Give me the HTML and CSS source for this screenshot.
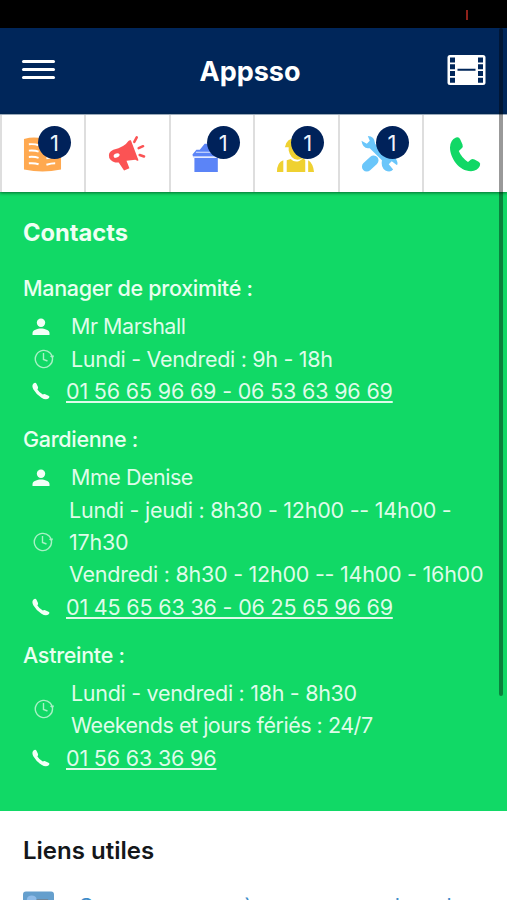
FILE: index.html
```html
<!DOCTYPE html>
<html lang="fr">
<head>
<meta charset="utf-8">
<title>Appsso</title>
<link rel="stylesheet" href="styles.css">
</head>
<body>
<svg width="0" height="0" class="defs" aria-hidden="true">
  <symbol id="person" viewBox="0 0 18 18"><circle cx="9" cy="4.7" r="4.2"/><path d="M.5 17v-2c0-3 5-4.500 8.500-4.500s8.500 1.500 8.500 4.500v2z"/></symbol>
  <symbol id="clock" viewBox="0 0 20 20"><path d="M18.500 9.500a8.600 8.600 0 1 1-2.300-5.400q2 2 2.300 5.400M9.500 4v6.500l4 1.500M16.500 7l2 1.500 1-2" fill="none" stroke="currentColor" stroke-width="1.400"/></symbol>
  <symbol id="phone" viewBox="0 0 32 36"><path d="M7 1.500Q10 .5 11.300 3.500L13.500 8.500Q14.500 11 12.500 12.500L9.800 15Q12.500 21.500 19 26L22 23.500Q23.500 22.500 25.500 23.500L30 26Q32 27.500 30.800 30Q28.500 35 22 35.300C10 35 1 22 1 11.500Q1.200 4 7 1.500z"/></symbol>
  <symbol id="handset" viewBox="0 0 18 18"><path d="M1.500 1.500Q3.500-.1 4.500 1.800L6 5Q6.300 6.200 5.400 7.400Q7.500 10.600 10.800 12.600Q12 11.600 13.200 12.200L16.500 13.700Q18.200 14.600 16.700 16.200Q14 18.700 9.500 15.700Q4.500 12.700 1.300 7.200Q-.6 3.500 1.500 1.500z"/></symbol>
</svg>
<div class="statusbar"><span class="rec"></span></div>
<header class="topbar">
  <div class="burger"><i></i><i></i><i></i></div>
  <h1>Appsso</h1>
  <svg class="film" viewBox="0 0 38 30"><rect width="38" height="30" rx="2.500" fill="#fff"/><path d="M2.500 2.500h5v5h-5zM2.500 9.300h5v5h-5zM2.500 16h5v5h-5zM2.500 22.700h5v5h-5zM30.500 2.500h5v5h-5zM30.500 9.300h5v5h-5zM30.500 16h5v5h-5zM30.500 22.700h5v5h-5zM10 13.800h18v2H10z" fill="#00265a"/></svg>
</header>
<nav class="tabs">
  <div class="tab">
    <svg class="ico" viewBox="0 0 40 40"><path d="M1 4Q12 1 20 4Q29 1 39 4V35.500Q29 37.500 20 37.500Q11 37.500 1 35.500z" fill="#ffa950"/><path d="M6 9.500q6-.5 10 1M6 16q6-.5 10 1M6 22.500q6-.5 10 1M6 29q6-.5 10 1M24 24q5-1.500 9-1.500M24 30.500q5-1.500 9-1.500" fill="none" stroke="#fff" stroke-width="2"/></svg>
    <span class="badge">1</span>
  </div>
  <div class="tab">
    <svg class="ico" viewBox="0 0 40 40"><path fill-rule="evenodd" d="M24.500 5.500L32.300 25.800Q31 27 29 25.500L20 26.500L23 34L17.500 36.500L12 28.300Q5 28.500 2.300 23.500Q.5 17.500 6.500 15Q18 12.500 22 6.200Q23 5 24.500 5.500M8 19.500Q5.500 21.500 8 23.500Q13 23 13 20Q11.500 17.800 8 19.500z" fill="#fb5354"/><path d="M28 7l2.500-4.500M32.500 13.500l4.500-2M33.500 20.500l4.500 1.500" stroke="#fb5354" stroke-width="2.600" stroke-linecap="round"/></svg>
  </div>
  <div class="tab">
    <svg class="ico" viewBox="0 0 40 40"><path d="M3.500 23.500h24V38h-24zM1.500 20l4-5H9l5-6h14v13H2z" fill="#5b84f7"/><path d="M2 22.800h26M5 17.700h23" stroke="#dce5ff" stroke-width="1.200"/></svg>
    <span class="badge">1</span>
  </div>
  <div class="tab">
    <svg class="ico" viewBox="0 0 40 40"><path d="M9.500 11.500Q11 3.500 20 3v9.500h11v5Q29 25 22 25.500Q15 25 13 16v-3.500H9z" fill="#efd131"/><path d="M1 38q0-10 6.500-12v12zM11 38V26l4-1.500q6 6 13-1l2 2.500v12zM33 38V26q5 3 6 12z" fill="#efd131"/></svg>
    <span class="badge">1</span>
  </div>
  <div class="tab">
    <svg class="ico" viewBox="0 0 40 40"><path d="M8 1Q15 1 15.500 9L27 22Q33 20.500 36.500 24Q39.500 28 38 31L32.500 27L29.500 30L34 35.500Q31 39 26 36.500Q21 33 22.500 26L10 13.500Q3 15 1.500 6L7 9L10 6z" fill="#6ac6fa"/><path d="M7 32.500L14 26" stroke="#6ac6fa" stroke-width="10" stroke-linecap="round"/></svg>
    <span class="badge">1</span>
  </div>
  <div class="tab"><svg class="call"><use href="#phone"/></svg></div>
</nav>
<main class="contacts">
  <h2>Contacts</h2>
  <section>
    <h3>Manager de proximité :</h3>
    <div class="row"><svg class="mini"><use href="#person"/></svg><p class="tight">Mr Marshall</p></div>
    <div class="row"><svg class="clock"><use href="#clock"/></svg><p>Lundi - Vendredi : 9h - 18h</p></div>
    <div class="row tel"><svg class="mini"><use href="#handset"/></svg><a>01 56 65 96 69 - 06 53 63 96 69</a></div>
  </section>
  <section>
    <h3>Gardienne :</h3>
    <div class="row"><svg class="mini"><use href="#person"/></svg><p class="tight">Mme Denise</p></div>
    <div class="row hours"><svg class="clock"><use href="#clock"/></svg><p>Lundi - jeudi : 8h30 - 12h00 -- 14h00 -<br>17h30<br>Vendredi : 8h30 - 12h00 -- 14h00 - 16h00</p></div>
    <div class="row tel"><svg class="mini"><use href="#handset"/></svg><a>01 45 65 63 36 - 06 25 65 96 69</a></div>
  </section>
  <section>
    <h3>Astreinte :</h3>
    <div class="row"><svg class="clock"><use href="#clock"/></svg><p>Lundi - vendredi : 18h - 8h30<br><span class="tight">Weekends et jours fériés : 24/7</span></p></div>
    <div class="row tel"><svg class="mini"><use href="#handset"/></svg><a>01 56 63 36 96</a></div>
  </section>
</main>
<section class="links">
  <h2>Liens utiles</h2>
  <div class="link">
    <svg class="thumb" viewBox="0 0 32 32"><rect width="32" height="32" rx="3" fill="#659fcd"/><ellipse cx="9" cy="8" rx="5" ry="4" fill="#8fbce9"/><path d="M14 8h12v12H14z" fill="#77818b"/></svg>
    <a>Comme avance à nos espaces lors du cours</a>
  </div>
</section>
<div class="scroll"></div>
</body>
</html>
```
FILE: styles.css
```css
* { box-sizing: border-box; }
html, body { height: 900px; overflow: hidden; }
body { margin: 0; background: #fff; font: 21.500px/32.350px Inter, "Liberation Sans", sans-serif; color: #14171a; }
h1, h2, h3, p { margin: 0; }
svg { display: block; flex: none; }
.defs { position: absolute; }
.statusbar { height: 28px; background: #000; display: flex; justify-content: flex-end; padding: 10px 39px 0 0; }
.rec { width: 2px; height: 10px; background: #8e211a; }
.topbar { height: 86px; background: #00265a; display: flex; align-items: center; justify-content: space-between; padding: 0 21px 2px 22px; }
.topbar h1 { color: #fff; font-size: 27px; font-weight: 700; padding: 4px 2px 0 0; }
.burger { width: 33px; display: grid; gap: 5px; padding-bottom: 1px; }
.burger i { height: 3px; background: #fff; border-radius: 2px; }
.film { width: 39px; height: 30px; }
.tabs { height: 78px; display: grid; grid-template-columns: repeat(6, 84.400px); background: #fff; border-top: 1px solid #9aa9ba; position: relative; box-shadow: 0 1px 3px rgba(0, 50, 20, .65); }
.tab { position: relative; display: flex; align-items: center; justify-content: center; border-left: 2px solid #dedede; padding-right: 2px; }
.ico { width: 39px; height: 39px; margin-top: 1px; }
.call { width: 32px; height: 36px; fill: #11d866; margin-left: 2px; }
.badge { position: absolute; left: 36px; top: 11px; width: 33px; height: 33px; border-radius: 50%; background: #00225a; color: #edf3fc; text-align: center; line-height: 34px; font-size: 22px; }
.contacts { height: 619px; background: #11d966; color: #dffce9; padding: 24.500px 0 0 23px; }
.contacts h2 { color: #effff4; font-size: 23.700px; font-weight: 650; margin-bottom: 23.500px; }
.contacts h3 { color: #e9fff0; font-size: 21.500px; font-weight: 500; letter-spacing: -.3px; height: 32px; margin-bottom: 6px; }
.contacts section { margin-bottom: 16px; }
.row { display: flex; align-items: center; padding-left: 9px; white-space: nowrap; letter-spacing: -.3px; }
.tight { letter-spacing: -.48px; }
.mini { width: 18px; height: 18px; fill: #f3fff7; margin-right: 21px; }
.clock { width: 20px; height: 20px; color: #a8f2c5; margin: 0 17px 0 2px; }
.tel { letter-spacing: -.17px; }
.tel .mini { margin-right: 16px; }
.tel a { text-decoration: underline; text-decoration-thickness: 1.500px; text-underline-offset: 2px; text-decoration-skip-ink: none; }
.hours { letter-spacing: -.24px; }
.hours .clock { margin: 0 16px 0 1px; }
.links { padding: 24px 0 0 23px; }
.links h2 { font-size: 24px; font-weight: 600; height: 32px; }
.link { display: flex; align-items: flex-start; gap: 24px; padding-top: 24px; white-space: nowrap; }
.thumb { width: 31px; height: 32px; }
.link a { color: #3d8cc9; margin-top: -1px; }
.scroll { position: absolute; left: 499px; top: 28px; width: 4px; height: 668px; border-radius: 2px; background: rgba(0, 0, 0, .4); }
```
